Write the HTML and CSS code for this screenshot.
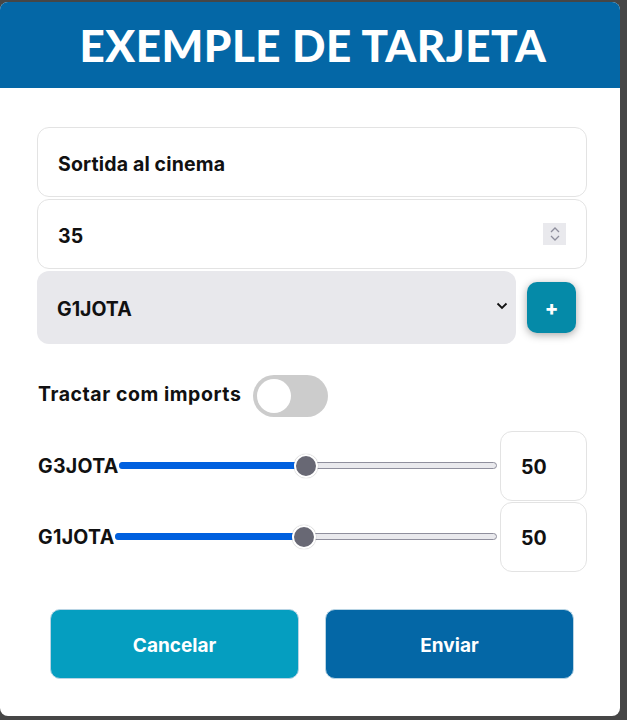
FILE: index.html
```html
<!DOCTYPE html>
<html lang="ca">
<head>
<meta charset="utf-8">
<title>Exemple de tarjeta</title>
<link rel="stylesheet" href="styles.css">
</head>
<body>
<div class="modal">
  <header class="modal-header">
    <h1 class="title">EXEMPLE DE TARJETA</h1>
  </header>
  <form class="form">
    <div class="field">Sortida al cinema</div>
    <div class="field field-number">
      <span>35</span>
      <span class="spinner">
        <svg width="14" height="18" viewBox="0 0 14 18"><path d="M3 7 L7 3 L11 7" fill="none" stroke="#8f8f9d" stroke-width="1.3"/><path d="M3 11 L7 15 L11 11" fill="none" stroke="#8f8f9d" stroke-width="1.3"/></svg>
      </span>
    </div>
    <div class="select-row">
      <div class="select">
        <span>G1JOTA</span>
        <svg class="chev" width="12" height="8" viewBox="0 0 12 8"><path d="M1.5 1.5 L6 6 L10.5 1.5" fill="none" stroke="#111" stroke-width="1.8"/></svg>
      </div>
      <button type="button" class="plus">+</button>
    </div>
    <div class="toggle-row">
      <span class="label">Tractar com imports</span>
      <span class="toggle"><span class="knob"></span></span>
    </div>
    <div class="slider-row">
      <span class="label">G3JOTA</span>
      <div class="range">
        <div class="fill" style="width:49.5%"></div>
        <div class="thumb" style="left:49.5%"></div>
      </div>
      <div class="numbox">50</div>
    </div>
    <div class="slider-row">
      <span class="label">G1JOTA</span>
      <div class="range">
        <div class="fill" style="width:49.5%"></div>
        <div class="thumb" style="left:49.5%"></div>
      </div>
      <div class="numbox">50</div>
    </div>
    <div class="actions">
      <button type="button" class="btn btn-cancel">Cancelar</button>
      <button type="button" class="btn btn-send">Enviar</button>
    </div>
  </form>
</div>
</body>
</html>
```
FILE: styles.css
```css
* { box-sizing: border-box; }
html, body { margin: 0; padding: 0; }
body {
  background: #464646;
  width: 627px;
  height: 720px;
  overflow: hidden;
  font-family: "Inter", "Noto Sans", sans-serif;
  color: #111;
}
.modal {
  margin-top: 2px;
  width: 620px;
  height: 714px;
  background: #fff;
  border-radius: 8px;
  overflow: hidden;
}
.modal-header {
  background: #0467a6;
  height: 86px;
  display: flex;
  align-items: center;
  justify-content: center;
  padding-left: 6px;
}
.title {
  margin: 0;
  color: #fff;
  font-family: "Lato", sans-serif;
  font-weight: 900;
  font-size: 44px;
  letter-spacing: 0.5px;
  line-height: 1;
}
.form {
  padding: 39px 33px 0 37px;
  display: flex;
  flex-direction: column;
}
.field {
  height: 70px;
  border: 1px solid #e3e3e3;
  border-radius: 12px;
  padding: 3px 20px 0;
  display: flex;
  align-items: center;
  font-size: 19.5px;
  font-weight: 700;
  letter-spacing: 0.15px;
  margin-bottom: 2px;
}
.field-number { justify-content: space-between; padding-right: 20px; }
.spinner {
  width: 23px;
  height: 22px;
  margin-top: -3px;
  background: #e9e9ed;
  display: flex;
  align-items: center;
  justify-content: center;
}
.select-row {
  display: flex;
  align-items: center;
  gap: 11px;
}
.select {
  flex: 0 0 479px;
  height: 73px;
  background: #e8e8ec;
  border-radius: 12px;
  display: flex;
  align-items: center;
  justify-content: space-between;
  padding: 2px 8px 0 20px;
  font-size: 19.5px;
  font-weight: 700;
}
.chev { margin-top: -6px; }
.plus {
  width: 49px;
  height: 51px;
  border: none;
  border-radius: 10px;
  background: #058aa8;
  color: #fff;
  font-family: "Inter", sans-serif;
  font-weight: 800;
  font-size: 20px;
  padding: 0;
  box-shadow: 0 2px 8px rgba(0,0,0,0.35);
}
.toggle-row {
  display: flex;
  align-items: center;
  gap: 12px;
  margin-top: 31px;
  padding-left: 1px;
}
.toggle-row .label { margin-top: -5px; letter-spacing: 0.55px; }
.label { font-size: 19.5px; font-weight: 700; }
.slider-row .label { letter-spacing: 0.3px; }
.toggle {
  width: 75px;
  height: 42px;
  border-radius: 21px;
  background: #cccccc;
  display: flex;
  align-items: center;
  padding-left: 4px;
}
.knob {
  width: 34px;
  height: 34px;
  border-radius: 50%;
  background: #fff;
}
.slider-row {
  display: flex;
  align-items: center;
  padding-left: 1px;
  height: 71px;
}
.toggle-row + .slider-row { margin-top: 13px; }
.range {
  position: relative;
  flex: 1;
  height: 7px;
  margin-right: 3px;
  background: #e9e9ed;
  border: 1px solid #8f8f9d;
  border-radius: 4px;
}
.fill {
  position: absolute;
  left: -1px; top: -1px; bottom: -1px;
  background: #0060df;
  border-radius: 4px 0 0 4px;
}
.thumb {
  position: absolute;
  top: 50%;
  width: 24px;
  height: 24px;
  margin-left: -12px;
  margin-top: -12px;
  border-radius: 50%;
  background: #686874;
  border: 2px solid #fff;
  box-shadow: 0 0 1px rgba(0,0,0,0.4);
}
.numbox {
  width: 87px;
  height: 70px;
  border: 1px solid #e3e3e3;
  border-radius: 12px;
  display: flex;
  align-items: center;
  padding: 3px 0 0 20px;
  font-size: 19.5px;
  font-weight: 700;
}
.actions {
  display: flex;
  gap: 26px;
  padding: 0 13px;
  margin-top: 37px;
}
.btn {
  width: 249px;
  height: 70px;
  border: 1px solid #b8d4e4;
  border-radius: 10px;
  color: #fff;
  font-family: "Inter", sans-serif;
  font-weight: 700;
  font-size: 19px;
  padding-top: 3px;
}
.btn-cancel { background: #059ec0; }
.btn-send { background: #0467a6; }
```
